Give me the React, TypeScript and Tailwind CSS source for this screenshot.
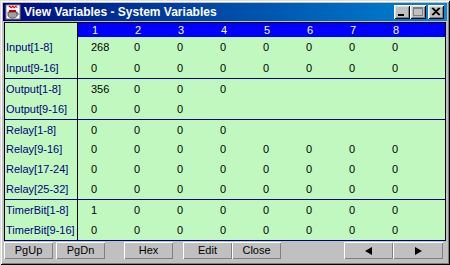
import React from "react";

type Row = [string, string[]];
const z8 = ["0", "0", "0", "0", "0", "0", "0", "0"];

const groups: { h: string; border: boolean; rows: Row[] }[] = [
  {
    h: "h-[42px]",
    border: true,
    rows: [
      ["Input[1-8]", ["268", "0", "0", "0", "0", "0", "0", "0"]],
      ["Input[9-16]", z8],
    ],
  },
  {
    h: "h-[41px]",
    border: true,
    rows: [
      ["Output[1-8]", ["356", "0", "0", "0"]],
      ["Output[9-16]", ["0", "0", "0"]],
    ],
  },
  {
    h: "h-[80px]",
    border: true,
    rows: [
      ["Relay[1-8]", ["0", "0", "0", "0"]],
      ["Relay[9-16]", z8],
      ["Relay[17-24]", z8],
      ["Relay[25-32]", z8],
    ],
  },
  {
    h: "h-[40px]",
    border: false,
    rows: [
      ["TimerBit[1-8]", ["1", "0", "0", "0", "0", "0", "0", "0"]],
      ["TimerBit[9-16]", z8],
    ],
  },
];

const font = { fontFamily: '"Liberation Sans", Arial, sans-serif' };

function TitleBtn({ children, className = "" }: { children: React.ReactNode; className?: string }) {
  return (
    <div
      className={`w-[16px] h-[14px] bg-[#c0c0c0] flex items-center justify-center shadow-[inset_1px_1px_#ffffff,inset_-1px_-1px_#000000,inset_2px_2px_#dfdfdf,inset_-2px_-2px_#808080] ${className}`}
    >
      {children}
    </div>
  );
}

function Btn({ children, className = "" }: { children: React.ReactNode; className?: string }) {
  return (
    <div
      className={`w-[49px] h-[17px] bg-[#c0c0c0] flex items-center justify-center text-[11px] text-black shadow-[inset_1px_1px_#ffffff,inset_-1px_-1px_#808080] ${className}`}
    >
      {children}
    </div>
  );
}

export default function App() {
  return (
    <div
      className="w-[450px] h-[265px] bg-[#c0c0c0] p-[3px] flex flex-col shadow-[inset_1px_1px_#dfdfdf,inset_-1px_-1px_#000000,inset_2px_2px_#ffffff,inset_-2px_-2px_#808080]"
      style={font}
    >
      {/* Title bar */}
      <div className="h-[18px] flex items-center bg-gradient-to-r from-[#000080] to-[#1084d0] pl-[2px] pr-[3px]">
        <svg width="16" height="16" viewBox="0 0 16 16" className="shrink-0">
          <rect x="1" y="1" width="14" height="14" fill="#ffffff" />
          <rect x="1" y="1" width="14" height="14" fill="none" stroke="#808080" strokeWidth="1" />
          <path d="M4 3 C5 1,6 5,7 3 C8 1,9 5,10 3 C11 1,12 4,12 3" stroke="#e00000" strokeWidth="1.2" fill="none" />
          <path d="M3 8 H12 V11 C12 13,10 14,7.5 14 C5 14,3 13,3 11 Z" fill="#a0a0a0" stroke="#404040" strokeWidth="0.8" />
          <path d="M12 9 C14 9,14 11,12 11" stroke="#404040" strokeWidth="0.8" fill="none" />
          <rect x="4" y="6" width="7" height="2" fill="#c00000" />
        </svg>
        <div className="ml-[3px] text-white font-bold text-[12px] leading-none whitespace-nowrap">
          View Variables - System Variables
        </div>
        <div className="ml-auto flex items-center">
          <TitleBtn>
            <svg width="16" height="14" viewBox="0 0 16 14">
              <rect x="4" y="9" width="6" height="2" fill="#000" />
            </svg>
          </TitleBtn>
          <TitleBtn>
            <svg width="16" height="14" viewBox="0 0 16 14">
              <rect x="3.5" y="2.5" width="9" height="8" fill="none" stroke="#808080" />
              <rect x="3" y="2" width="10" height="2" fill="#808080" />
            </svg>
          </TitleBtn>
          <TitleBtn className="ml-[2px]">
            <svg width="16" height="14" viewBox="0 0 16 14">
              <path d="M4 3 L11 10 M5 3 L12 10 M11 3 L4 10 M12 3 L5 10" stroke="#000" strokeWidth="1.1" />
            </svg>
          </TitleBtn>
        </div>
      </div>

      {/* Table */}
      <div className="mt-[1px] mx-[1px] border border-black border-b-[#000080] bg-[#c0f8c0] flex flex-col text-[11px]">
        <div className="h-[14px] flex">
          <div className="w-[73px] border-r border-black bg-[#c0f8c0]" />
          <div className="flex-1 bg-[#0000ff] flex items-center text-white">
            {["1", "2", "3", "4", "5", "6", "7", "8"].map((n) => (
              <div key={n} className="w-[43px] pl-[14px] leading-none">
                {n}
              </div>
            ))}
          </div>
        </div>
        {groups.map((g, gi) => (
          <div key={gi} className={`${g.h} flex flex-col ${g.border ? "border-b border-[#000080]" : ""}`}>
            {g.rows.map(([label, vals]) => (
              <div key={label} className="flex-1 flex">
                <div className="w-[73px] border-r border-black pl-[1px] text-[#000080] flex items-center whitespace-nowrap">
                  {label}
                </div>
                <div className="flex items-center text-black">
                  {vals.map((v, i) => (
                    <div key={i} className="w-[43px] pl-[13px]">
                      {v}
                    </div>
                  ))}
                </div>
              </div>
            ))}
          </div>
        ))}
      </div>

      {/* Buttons */}
      <div className="mt-[1px] mx-[1px] flex">
        <Btn>PgUp</Btn>
        <Btn className="ml-[3px]">PgDn</Btn>
        <Btn className="ml-[19px]">Hex</Btn>
        <Btn className="ml-[10px]">Edit</Btn>
        <Btn>Close</Btn>
        <Btn className="ml-[63px]">
          <svg width="10" height="10" viewBox="0 0 10 10">
            <polygon points="1,5 8,1 8,9" fill="#000" />
          </svg>
        </Btn>
        <Btn className="w-[50px]">
          <svg width="10" height="10" viewBox="0 0 10 10">
            <polygon points="9,5 2,1 2,9" fill="#000" />
          </svg>
        </Btn>
      </div>
    </div>
  );
}
